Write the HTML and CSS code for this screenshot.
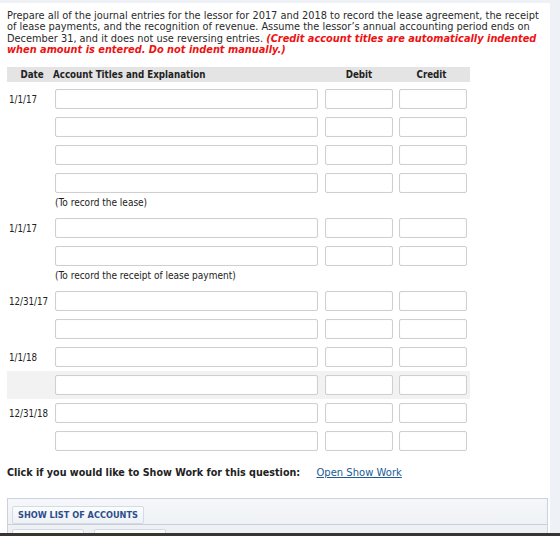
FILE: index.html
```html
<!DOCTYPE html>
<html lang="en">
<head>
  <meta charset="UTF-8">
  <meta name="viewport" content="width=device-width, initial-scale=1.0">
  <title>Journal Entries - Lessor</title>
  <link rel="stylesheet" href="styles.css">
</head>
<body>
  <div class="page">
    <!-- Question prompt -->
    <p class="prompt">
      Prepare all of the journal entries for the lessor for 2017 and 2018 to record the lease agreement, the receipt
      of lease payments, and the recognition of revenue. Assume the lessor’s annual accounting period ends on
      December 31, and it does not use reversing entries.
      <em class="note-red">(Credit account titles are automatically indented when amount is entered. Do not indent manually.)</em>
    </p>

    <!-- Journal entry grid -->
    <div class="journal">
      <div class="jrow head">
        <div class="c-date">Date</div>
        <div class="c-acct">Account Titles and Explanation</div>
        <div class="c-amt">Debit</div>
        <div class="c-amt">Credit</div>
      </div>

      <div class="jrow"><div class="c-date">1/1/17</div><div class="c-acct"><input type="text"></div><div class="c-amt"><input type="text"></div><div class="c-amt"><input type="text"></div></div>
      <div class="jrow"><div class="c-date"></div><div class="c-acct"><input type="text"></div><div class="c-amt"><input type="text"></div><div class="c-amt"><input type="text"></div></div>
      <div class="jrow"><div class="c-date"></div><div class="c-acct"><input type="text"></div><div class="c-amt"><input type="text"></div><div class="c-amt"><input type="text"></div></div>
      <div class="jrow"><div class="c-date"></div><div class="c-acct"><input type="text"></div><div class="c-amt"><input type="text"></div><div class="c-amt"><input type="text"></div></div>
      <div class="jnote">(To record the lease)</div>

      <div class="jrow"><div class="c-date">1/1/17</div><div class="c-acct"><input type="text"></div><div class="c-amt"><input type="text"></div><div class="c-amt"><input type="text"></div></div>
      <div class="jrow"><div class="c-date"></div><div class="c-acct"><input type="text"></div><div class="c-amt"><input type="text"></div><div class="c-amt"><input type="text"></div></div>
      <div class="jnote">(To record the receipt of lease payment)</div>

      <div class="jrow"><div class="c-date">12/31/17</div><div class="c-acct"><input type="text"></div><div class="c-amt"><input type="text"></div><div class="c-amt"><input type="text"></div></div>
      <div class="jrow"><div class="c-date"></div><div class="c-acct"><input type="text"></div><div class="c-amt"><input type="text"></div><div class="c-amt"><input type="text"></div></div>

      <div class="jrow"><div class="c-date">1/1/18</div><div class="c-acct"><input type="text"></div><div class="c-amt"><input type="text"></div><div class="c-amt"><input type="text"></div></div>
      <div class="jrow hover"><div class="c-date"></div><div class="c-acct"><input type="text"></div><div class="c-amt"><input type="text"></div><div class="c-amt"><input type="text"></div></div>

      <div class="jrow"><div class="c-date">12/31/18</div><div class="c-acct"><input type="text"></div><div class="c-amt"><input type="text"></div><div class="c-amt"><input type="text"></div></div>
      <div class="jrow"><div class="c-date"></div><div class="c-acct"><input type="text"></div><div class="c-amt"><input type="text"></div><div class="c-amt"><input type="text"></div></div>
    </div>

    <p class="show-work">Click if you would like to Show Work for this question: <a href="#">Open Show Work</a></p>

    <!-- Tool panel -->
    <div class="tools">
      <div class="tools-bar">
        <button class="tool-btn">SHOW LIST OF ACCOUNTS</button>
      </div>
      <div class="tools-bar lower">
        <button class="tool-btn blank"></button>
        <button class="tool-btn blank"></button>
      </div>
    </div>
  </div>
  <div class="dock-edge"></div>
</body>
</html>
```

FILE: styles.css
```css
/* Reset & base */
* { margin: 0; padding: 0; box-sizing: border-box; }
html, body { height: 536px; overflow: hidden; }
body { background: #eef1f5; font-family: 'DejaVu Sans', Verdana, sans-serif; color: #222; padding-top: 3px; }
a { color: #1d5b95; }

.page { background: #fff; width: 550px; height: 530px; padding: 7px 0 0 7px; overflow: hidden; }

/* Prompt */
.prompt { font-size: 9.8px; line-height: 11.3px; width: 541px; color: #2a2a2a; }
.note-red { color: #ee1111; font-weight: bold; }

/* Journal grid */
.journal { width: 463px; margin-top: 12px; font-family: Tahoma, 'DejaVu Sans Condensed', 'Liberation Sans', sans-serif; font-size: 9.7px; color: #222; }
.jrow { display: grid; grid-template-columns: 48px 270px 74px 71px; align-items: center; height: 28px; }
.jrow.head { height: 15px; background: #e4e4e4; font-weight: bold; margin-bottom: 3px; }
.jrow.head .c-date { text-align: center; }
.jrow.head .c-acct { margin-left: -2px; }
.jrow.head .c-amt { text-align: center; padding-right: 6px; }
.jrow.hover { background: #f2f2f2; }
.c-date { padding-left: 2px; }
.jrow input { display: block; height: 20px; border: 1px solid #cfcfcf; border-radius: 2px; background: #fff; box-shadow: inset 0 0 1px #e6e6e6; }
.c-acct input { width: 263px; }
.c-amt input { width: 68px; }

.jnote { height: 17px; padding: 0 0 0 48px; font-size: 10px; }

/* Show work line */
.show-work { margin-top: 12px; font-size: 9.6px; font-weight: bold; color: #222; }
.show-work a { font-weight: normal; font-size: 10px; margin-left: 13px; }

/* Tool panel */
.tools { margin-top: 20px; width: 541px; border: 1px solid #ccd3de; background: linear-gradient(#f5f7fa, #e9ecf0); }
.tools-bar { height: 25px; padding: 4px 4px; }
.tools-bar.lower { border-top: 1px solid #c7cfdb; display: flex; gap: 10px; }
.tool-btn { height: 18px; padding: 0 5px; border: 1px solid #d5dbe4; border-radius: 2px; background: linear-gradient(#fbfcfd, #eef1f5); color: #2b4e8c; font-family: 'DejaVu Sans', Verdana, sans-serif; font-weight: bold; font-size: 8.2px; }
.tool-btn.blank { width: 72px; }

.dock-edge { position: fixed; left: 0; right: 0; bottom: 0; height: 3px; background: #3a3431; }
```
